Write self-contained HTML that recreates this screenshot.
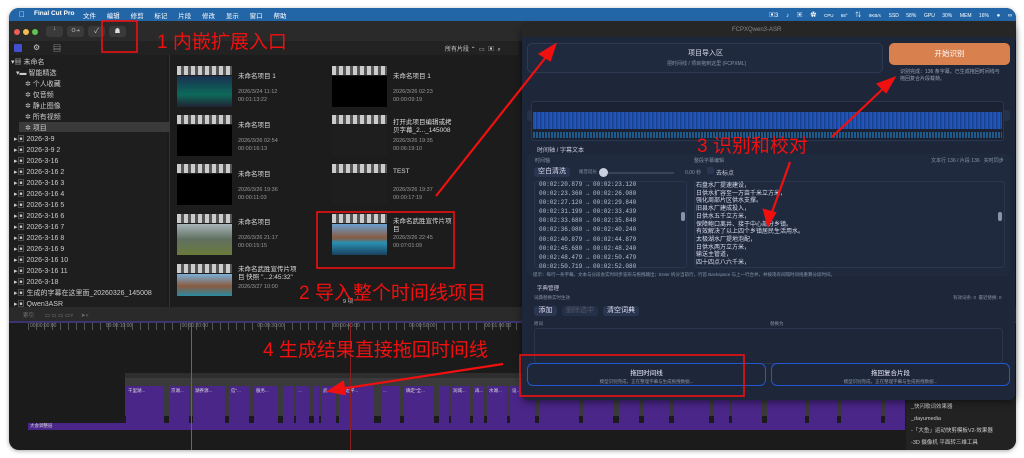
<!DOCTYPE html><html><head><meta charset="utf-8"><style>
*{margin:0;padding:0;box-sizing:border-box}
body{width:1024px;height:458px;background:#fff;position:relative;overflow:hidden;font-family:"Liberation Sans","Noto Sans CJK SC",sans-serif;color:#ddd}
.a{position:absolute}
.t{position:absolute;white-space:nowrap}
.win{left:9px;top:8px;width:1007px;height:442px;background:#1b1b1b;border-radius:10px;overflow:hidden;box-shadow:0 1px 4px rgba(0,0,0,.35)}
.sb{font-size:7px;color:#ccc}
.clap{position:absolute;width:55px;height:9px;background:repeating-linear-gradient(90deg,#ccc 0 4px,#555 4px 7px)}
.th{position:absolute;width:55px;height:31px;background:#000}
.tt{font-size:6.5px;color:#ddd;position:absolute;white-space:nowrap}
.ts{font-size:5.5px;color:#999;position:absolute;white-space:nowrap}
.red{color:#f01010;font-size:19px;position:absolute;white-space:nowrap;font-family:"Liberation Sans","Noto Sans CJK SC",sans-serif}
.clip{position:absolute;top:378px;height:37px;background:#4a2688;font-size:4.5px;color:#ddd;padding:2px}
.tab{position:absolute;top:86px;height:11px;background:#26324a;border-radius:3px;font-size:6px;color:#cfd6e4;text-align:center;line-height:11px}
.mono{font-family:"Liberation Mono","Noto Sans CJK SC",monospace;font-size:6px;color:#b8c0cc}
.btn{position:absolute;background:#2a3650;border-radius:3px;font-size:7px;color:#dde;text-align:center}
</style></head><body>
<div class="a win">
 <!-- menubar -->
 <div class="a" style="left:0;top:0;width:1007px;height:13px;background:#2366a8"></div>
 <div class="t" style="left:10px;top:2px;font-size:8px;color:#fff">&#63743;</div>
 <div class="t" style="left:25px;top:2px;font-size:6.5px;color:#fff;font-weight:bold">Final Cut Pro</div>
 <div class="t" style="left:74px;top:2px;font-size:6.5px;color:#fff;word-spacing:9px">文件 编辑 修剪 标记 片段 修改 显示 窗口 帮助</div>
 <div class="t" style="left:760px;top:2px;font-size:6px;color:#fff;word-spacing:6px">▣3 ♪ ▣ ✿ <span style="font-size:4.5px">CPU 68°</span> ⇅ <span style="font-size:4.5px">9KB/s</span> <span style="font-size:5px">SSD 58%</span> <span style="font-size:5px">GPU 30%</span> <span style="font-size:5px">MEM 16%</span> ● ∞ ▲</div>
 <!-- toolbar -->
 <div class="a" style="left:0;top:13px;width:1007px;height:20px;background:#2a2a2a"></div>
 <div class="a" style="left:5px;top:21px;width:6px;height:6px;border-radius:50%;background:#ed5f56"></div>
 <div class="a" style="left:14px;top:21px;width:6px;height:6px;border-radius:50%;background:#f4bd4f"></div>
 <div class="a" style="left:23px;top:21px;width:6px;height:6px;border-radius:50%;background:#5fc453"></div>
 <div class="a" style="left:37px;top:18px;width:17px;height:11px;background:#3a3a3a;border-radius:3px;font-size:6px;text-align:center;color:#ccc">↓</div>
 <div class="a" style="left:58px;top:18px;width:17px;height:11px;background:#3a3a3a;border-radius:3px;font-size:5px;text-align:center;color:#ccc;line-height:11px">O⇥</div>
 <div class="a" style="left:79px;top:18px;width:17px;height:11px;background:#3a3a3a;border-radius:3px;font-size:7px;text-align:center;color:#ccc">✓</div>
 <div class="a" style="left:100px;top:18px;width:17px;height:11px;background:#3a3a3a;border-radius:3px;font-size:6px;text-align:center;color:#ddd">☗</div>
 <!-- icon row -->
 <div class="a" style="left:0;top:33px;width:510px;height:14px;background:#222"></div>
 <div class="a" style="left:5px;top:36px;width:8px;height:8px;background:#4050d0;border-radius:1px"></div>
 <div class="t" style="left:24px;top:35px;font-size:8px;color:#ccc">⚙</div>
 <div class="t" style="left:44px;top:35px;font-size:8px;color:#ccc">▤</div>
 <div class="t" style="left:436px;top:36px;font-size:6px;color:#ccc">所有片段 ⌃ &nbsp;▭ &nbsp;▣ &nbsp;⌕</div>
 <!-- sidebar -->
 <div class="a" style="left:0;top:47px;width:158px;height:262px;background:#1e1e1e"></div>
 <div class="a" style="left:160px;top:47px;width:1px;height:262px;background:#333"></div>
 <div class="a" style="left:10px;top:114px;width:154px;height:10px;background:#3a3a3a"></div>
 <div class="sb">
 <div class="t" style="left:2px;top:49px">▾▦ 未命名</div>
 <div class="t" style="left:7px;top:60px">▾▬ 智能精选</div>
 <div class="t" style="left:16px;top:71px">✲ 个人收藏</div>
 <div class="t" style="left:16px;top:82px">✲ 仅音频</div>
 <div class="t" style="left:16px;top:93px">✲ 静止图像</div>
 <div class="t" style="left:16px;top:104px">✲ 所有视频</div>
 <div class="t" style="left:16px;top:115px">✲ 项目</div>
 <div class="t" style="left:5px;top:126px">▸▣ 2026-3-9</div>
 <div class="t" style="left:5px;top:137px">▸▣ 2026-3-9 2</div>
 <div class="t" style="left:5px;top:148px">▸▣ 2026-3-16</div>
 <div class="t" style="left:5px;top:159px">▸▣ 2026-3-16 2</div>
 <div class="t" style="left:5px;top:170px">▸▣ 2026-3-16 3</div>
 <div class="t" style="left:5px;top:181px">▸▣ 2026-3-16 4</div>
 <div class="t" style="left:5px;top:192px">▸▣ 2026-3-16 5</div>
 <div class="t" style="left:5px;top:203px">▸▣ 2026-3-16 6</div>
 <div class="t" style="left:5px;top:214px">▸▣ 2026-3-16 7</div>
 <div class="t" style="left:5px;top:225px">▸▣ 2026-3-16 8</div>
 <div class="t" style="left:5px;top:236px">▸▣ 2026-3-16 9</div>
 <div class="t" style="left:5px;top:247px">▸▣ 2026-3-16 10</div>
 <div class="t" style="left:5px;top:258px">▸▣ 2026-3-16 11</div>
 <div class="t" style="left:5px;top:269px">▸▣ 2026-3-18</div>
 <div class="t" style="left:5px;top:280px">▸▣ 生成的字幕在这里面_20260326_145008</div>
 <div class="t" style="left:5px;top:291px">▸▣ Qwen3ASR</div>
 </div>
 <!-- browser -->
 <div class="a" style="left:161px;top:47px;width:350px;height:262px;background:#1c1c1c"></div>
 <div class="clap" style="left:168px;top:58px"></div><div class="th" style="left:168px;top:68px;background:linear-gradient(#1a3050,#0c6a5a 60%,#223)"></div>
 <div class="tt" style="left:229px;top:62px">未命名项目 1</div><div class="ts" style="left:229px;top:81px">2026/3/24 11:12</div><div class="ts" style="left:229px;top:89px">00:01:13:22</div>
 <div class="clap" style="left:323px;top:58px"></div><div class="th" style="left:323px;top:68px"></div>
 <div class="tt" style="left:384px;top:62px">未命名项目 1</div><div class="ts" style="left:384px;top:81px">2026/3/26 02:23</div><div class="ts" style="left:384px;top:89px">00:00:09:19</div>
 <div class="clap" style="left:168px;top:107px"></div><div class="th" style="left:168px;top:117px"></div>
 <div class="tt" style="left:229px;top:111px">未命名项目</div><div class="ts" style="left:229px;top:130px">2026/3/26 02:54</div><div class="ts" style="left:229px;top:138px">00:00:16:13</div>
 <div class="clap" style="left:323px;top:107px"></div><div class="th" style="left:323px;top:117px;background:#1e1e1e"></div>
 <div class="tt" style="left:384px;top:111px;line-height:8px">打开此项目编辑或拷<br>贝字幕_2..._145008</div><div class="ts" style="left:384px;top:130px">2026/3/26 19:35</div><div class="ts" style="left:384px;top:138px">00:06:19:10</div>
 <div class="clap" style="left:168px;top:156px"></div><div class="th" style="left:168px;top:166px"></div>
 <div class="tt" style="left:229px;top:160px">未命名项目</div><div class="ts" style="left:229px;top:179px">2026/3/26 19:36</div><div class="ts" style="left:229px;top:187px">00:00:11:03</div>
 <div class="clap" style="left:323px;top:156px"></div><div class="th" style="left:323px;top:166px;background:#1e1e1e"></div>
 <div class="tt" style="left:384px;top:160px">TEST</div><div class="ts" style="left:384px;top:179px">2026/3/26 19:37</div><div class="ts" style="left:384px;top:187px">00:00:17:19</div>
 <div class="clap" style="left:168px;top:206px"></div><div class="th" style="left:168px;top:216px;background:linear-gradient(#a8b4b8,#607060 50%,#6a7a3a)"></div>
 <div class="tt" style="left:229px;top:208px">未命名项目</div><div class="ts" style="left:229px;top:227px">2026/3/26 21:17</div><div class="ts" style="left:229px;top:235px">00:00:15:15</div>
 <div class="clap" style="left:323px;top:206px"></div><div class="th" style="left:323px;top:216px;background:linear-gradient(#6aa0d0,#8a5a40 45%,#2a90b0 60%,#1a4060)"></div>
 <div class="tt" style="left:384px;top:210px;line-height:8px">未命名武胜宣传片项<br>目</div><div class="ts" style="left:384px;top:227px">2026/3/26 22:45</div><div class="ts" style="left:384px;top:235px">00:07:01:09</div>
 <div class="clap" style="left:168px;top:256px"></div><div class="th" style="left:168px;top:266px;height:22px;background:linear-gradient(#7ab0d8,#8a5a40 55%,#2a8aa0)"></div>
 <div class="tt" style="left:229px;top:258px;line-height:8px">未命名武胜宣传片项<br>目 快照 "...2:45:32"</div><div class="ts" style="left:229px;top:276px">2026/3/27 10:00</div>
 <div class="t" style="left:334px;top:289px;font-size:5.5px;color:#ccc">9 项</div>
 <!-- timeline -->
 <div class="a" style="left:0;top:299px;width:1007px;height:14px;background:#2a2a2a"></div>
 <div class="t" style="left:14px;top:303px;font-size:5.5px;color:#777">索引 &nbsp; &nbsp; &nbsp; ▭ ▭ ▭ ▭˅ &nbsp; &nbsp; ➤˅</div>
 <div class="a" style="left:0;top:313px;width:1007px;height:2px;background:#3a3570"></div>
 <div class="a" style="left:19px;top:315px;width:900px;height:7px;background:repeating-linear-gradient(90deg,#555 0 1px,transparent 1px 8px)"></div>
 <div class="t" style="left:21px;top:315px;font-size:5px;color:#888;word-spacing:48px">00:00:00:00 00:00:10:00 00:00:20:00 00:00:30:00 00:00:40:00 00:00:50:00 00:01:00:00</div>
 <div class="a" style="left:116px;top:365px;width:780px;height:6px;background:#2e2e2e"></div>
 <div class="a" style="left:116px;top:370px;width:780px;height:38px;background:#3a3a3a"></div>
 <div class="clip" style="left:117px;width:38px">千里湖...</div>
 <div class="clip" style="left:160px;width:20px">京湖...</div>
 <div class="clip" style="left:184px;width:32px">湖养源...</div>
 <div class="clip" style="left:220px;width:20px">信"...</div>
 <div class="clip" style="left:245px;width:24px">服务...</div>
 <div class="clip" style="left:274px;width:11px"></div>
 <div class="clip" style="left:287px;width:13px">...</div>
 <div class="clip" style="left:305px;width:5px"></div>
 <div class="clip" style="left:312px;width:15px">武...</div>
 <div class="clip" style="left:330px;width:35px">习近平...</div>
 <div class="clip" style="left:372px;width:19px">...</div>
 <div class="clip" style="left:395px;width:30px">确定"全...</div>
 <div class="clip" style="left:430px;width:10px"></div>
 <div class="clip" style="left:442px;width:19px">润城...</div>
 <div class="clip" style="left:464px;width:11px">再...</div>
 <div class="clip" style="left:478px;width:20px">水湖...</div>
 <div class="clip" style="left:501px;width:25px">设...</div>
 <div class="clip" style="left:530px;width:40px"></div>
 <div class="clip" style="left:574px;width:30px"></div>
 <div class="clip" style="left:610px;width:20px"></div>
 <div class="clip" style="left:635px;width:25px"></div>
 <div class="clip" style="left:665px;width:35px"></div>
 <div class="clip" style="left:705px;width:15px"></div>
 <div class="clip" style="left:723px;width:30px"></div>
 <div class="clip" style="left:758px;width:38px"></div>
 <div class="clip" style="left:800px;width:28px"></div>
 <div class="clip" style="left:832px;width:40px"></div>
 <div class="clip" style="left:876px;width:20px"></div>
 <div class="a" style="left:19px;top:415px;width:877px;height:7px;background:#4a2688;font-size:4.5px;color:#ddd;padding-left:2px">大会调整层</div>
 <div class="a" style="left:182px;top:315px;width:1px;height:127px;background:#666"></div>
 <div class="a" style="left:341px;top:315px;width:1px;height:127px;background:#8a2020"></div>
 <div class="a" style="left:897px;top:390px;width:110px;height:52px;background:#222"></div>
 <div class="t" style="left:902px;top:393px;font-size:5.5px;color:#ccc;line-height:12px">_快闪歌词效果器<br>_dayumedia<br>-「大鱼」运动快剪模板V2-效果器<br>-3D 摄像机 平面转三维工具</div>
</div>

<!-- plugin window -->
<div class="a" style="left:522px;top:24px;width:493px;height:376px;background:#1d2739;border-radius:6px;overflow:hidden;box-shadow:0 2px 8px rgba(0,0,0,.5)">
 <div class="a" style="left:0;top:0;width:493px;height:13px;background:#262626"></div>
 <div class="t" style="left:210px;top:3px;font-size:6px;color:#888">FCPXQwen3-ASR</div>
 <div class="a" style="left:5px;top:19px;width:356px;height:30px;border:1px solid #2e3a52;border-radius:5px;background:#1f2a3e"></div>
 <div class="t" style="left:166px;top:24px;font-size:7px;color:#dde">项目导入区</div>
 <div class="t" style="left:145px;top:36px;font-size:5px;color:#8894a8">把时间线 / 项目拖到这里 (FCPXML)</div>
 <div class="a" style="left:367px;top:19px;width:121px;height:22px;background:#d8804e;border-radius:5px;font-size:7.5px;color:#fff;text-align:center;line-height:22px">开始识别</div>
 <div class="t" style="left:378px;top:45px;font-size:5px;color:#9aa4b6;line-height:7px">识别完成：136 条字幕。已生成拖回时间线与<br>拖回复合片段载荷。</div>
 <div class="tab" style="left:5px;width:158px">实验 A 拷贝样本直生 proFF</div>
 <div class="tab" style="left:167px;width:158px">实验 B 样本结构重建</div>
 <div class="tab" style="left:330px;width:158px">实验 C FCPXML 内联故事情节</div>
 <div class="a" style="left:9px;top:77px;width:473px;height:40px;border:1px solid #2a3650;border-radius:3px;background:#1a2234"></div>
 <div class="a" style="left:11px;top:88px;width:469px;height:17px;background:repeating-linear-gradient(90deg,#1d4fb0 0 2px,#2458c0 2px 3px,#173f90 3px 4px);"></div>
 <div class="a" style="left:11px;top:108px;width:469px;height:6px;background:repeating-linear-gradient(90deg,#1e5a8a 0 2px,#1a2234 2px 3px)"></div>
 <div class="t" style="left:15px;top:121px;font-size:6px;color:#ccd">时间轴 / 字幕文本</div>
 <div class="a" style="left:5px;top:130px;width:483px;height:122px;background:#1f2a3f;border-radius:4px"></div>
 <div class="t" style="left:13px;top:133px;font-size:5px;color:#8894a8">时间轴</div>
 <div class="t" style="left:172px;top:133px;font-size:5px;color:#8894a8">整段字幕编辑</div>
 <div class="t" style="left:409px;top:133px;font-size:5px;color:#8894a8">文本行 136 / 片段 136 &nbsp; 实时同步</div>
 <div class="btn" style="left:12px;top:143px;width:36px;height:10px;line-height:10px">空白清洗</div>
 <div class="t" style="left:57px;top:145px;font-size:4.5px;color:#8894a8">尾音延长</div>
 <div class="a" style="left:80px;top:148px;width:72px;height:2px;background:#38445c"></div>
 <div class="a" style="left:77px;top:144px;width:9px;height:9px;border-radius:50%;background:#c8d0e0"></div>
 <div class="t" style="left:163px;top:145px;font-size:5px;color:#8894a8" >0.00 秒</div>
 <div class="a" style="left:185px;top:143px;width:7px;height:7px;background:#2a3650;border-radius:2px"></div>
 <div class="t" style="left:194px;top:144px;font-size:6px;color:#ccd">去标点</div>
 <div class="a" style="left:12px;top:157px;width:153px;height:87px;border:1px solid #2a3650;border-radius:3px"></div>
 <div class="t mono" style="left:17px;top:156px;line-height:9.1px">00:02:20.879 → 00:02:23.120<br>00:02:23.360 → 00:02:26.080<br>00:02:27.120 → 00:02:29.840<br>00:02:31.199 → 00:02:33.439<br>00:02:33.680 → 00:02:35.840<br>00:02:36.080 → 00:02:40.240<br>00:02:40.879 → 00:02:44.879<br>00:02:45.680 → 00:02:48.240<br>00:02:48.479 → 00:02:50.479<br>00:02:50.719 → 00:02:52.080</div>
 <div class="a" style="left:159px;top:188px;width:4px;height:9px;background:#8894a8;border-radius:2px"></div>
 <div class="a" style="left:172px;top:157px;width:311px;height:87px;border:1px solid #2a3650;border-radius:3px"></div>
 <div class="a" style="left:476px;top:188px;width:4px;height:9px;background:#8894a8;border-radius:2px"></div>
 <div class="t" style="left:174px;top:159px;font-size:6px;color:#dde;line-height:7.7px">石盘水厂提速建设，<br>日供水扩容至一万亩千米立方米，<br>强化周部片区供水支撑。<br>旧县水厂建成投入，<br>日供水五千立方米，<br>保障鲍口离井、接于中心部分乡镇。<br>有效解决了以上四个乡镇居民生活用水。<br>太极湖水厂提地泡配，<br>日供水两万立方米，<br>输送主管道，<br>四十四点八六千米，</div>
 <div class="t" style="left:11px;top:248px;font-size:4.5px;color:#8894a8">提示：每行一条字幕。文本与分段会实时同步波形与拖拽输出；Enter 拆分当前行，行首 Backspace 与上一行合并，并按现有间隔时间线重算分段时间。</div>
 <div class="t" style="left:15px;top:260px;font-size:5.5px;color:#ccd">字典管理</div>
 <div class="t" style="left:12px;top:271px;font-size:4.5px;color:#8894a8">词典替换实时生效</div>
 <div class="t" style="left:431px;top:271px;font-size:4.5px;color:#8894a8">有效词条: 0 &nbsp;最近替换: 0</div>
 <div class="btn" style="left:12px;top:282px;width:23px;height:10px;line-height:10px">添加</div>
 <div class="btn" style="left:40px;top:282px;width:36px;height:10px;line-height:10px;color:#556;background:#243048">删除选中</div>
 <div class="btn" style="left:81px;top:282px;width:36px;height:10px;line-height:10px">清空词典</div>
 <div class="t" style="left:12px;top:297px;font-size:4.5px;color:#8894a8">原词</div>
 <div class="t" style="left:248px;top:297px;font-size:4.5px;color:#8894a8">替换为</div>
 <div class="a" style="left:12px;top:304px;width:469px;height:36px;border:1px solid #2a3650;border-radius:4px"></div>
 <div class="a" style="left:5px;top:339px;width:239px;height:23px;border:1px solid #2358d0;border-radius:6px;background:#1d2739;text-align:center">
  <div style="font-size:6.5px;color:#eef;margin-top:3px">拖回时间线</div><div style="font-size:4.5px;color:#8894a8;margin-top:2px">模型识别完成，正在整理字幕与生成拖拽数据...</div></div>
 <div class="a" style="left:249px;top:339px;width:239px;height:23px;border:1px solid #2358d0;border-radius:6px;background:#1d2739;text-align:center">
  <div style="font-size:6.5px;color:#eef;margin-top:3px">拖回复合片段</div><div style="font-size:4.5px;color:#8894a8;margin-top:2px">模型识别完成，正在整理字幕与生成拖拽数据...</div></div>
</div>

<!-- annotations -->
<svg class="a" style="left:0;top:0" width="1024" height="458">
 <g fill="none" stroke="#f01010" stroke-width="1.6">
  <rect x="102" y="21" width="35" height="31"/>
  <rect x="317" y="212" width="137" height="56"/>
  <rect x="520" y="355" width="224" height="41"/>
 </g>
 <g stroke="#f01010" stroke-width="2.2" fill="#f01010">
  <line x1="436" y1="196" x2="550" y2="52"/><polygon points="555,45 540,54 550,60"/>
  <line x1="832" y1="137" x2="888" y2="84"/><polygon points="894,78 878,84 886,92"/>
  <line x1="790" y1="162" x2="771" y2="215"/><polygon points="768,225 764,210 775,213"/>
  <line x1="503" y1="364" x2="340" y2="389"/><polygon points="329,391 343,382 345,394"/>
 </g>
</svg>
<div class="red" style="left:157px;top:27px">1 内嵌扩展入口</div>
<div class="red" style="left:299px;top:278px">2 导入整个时间线项目</div>
<div class="red" style="left:697px;top:131px">3 识别和校对</div>
<div class="red" style="left:263px;top:335px">4 生成结果直接拖回时间线</div>
</body></html>
